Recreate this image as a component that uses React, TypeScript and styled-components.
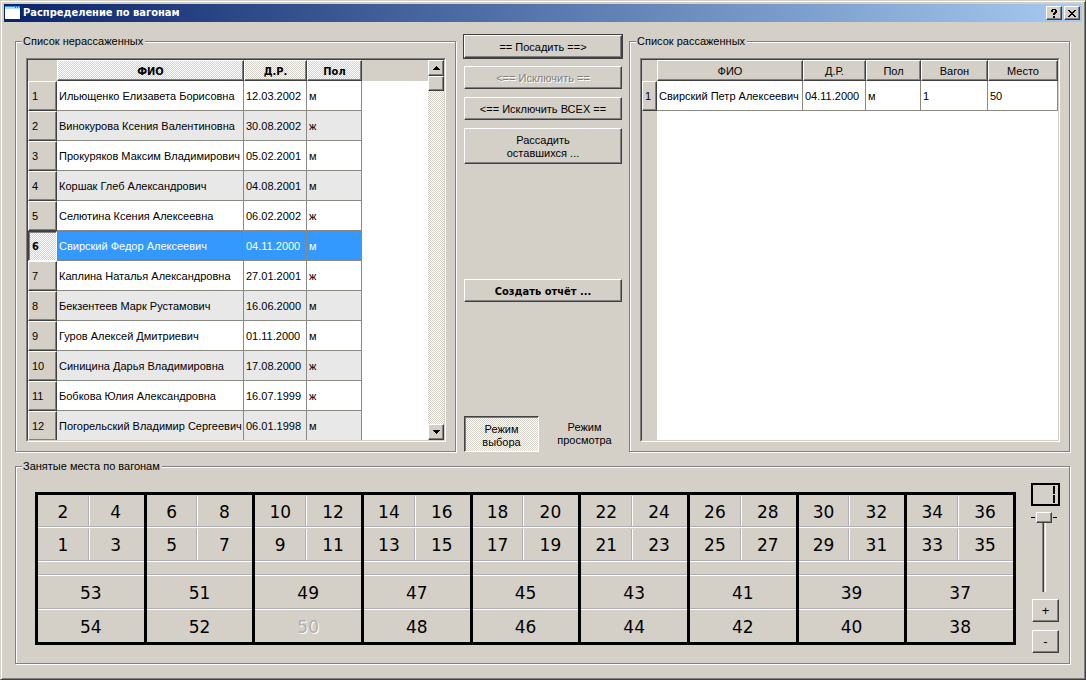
import React, { useState } from "react";
import styled, { createGlobalStyle, css } from "styled-components";

const face = "#d4d0c8";
const shade = "#808080";
const dark = "#404040";
const dither = `repeating-conic-gradient(#ffffff 0 25%, ${face} 0 50%) 0 0 / 2px 2px`;
const uiFont = `"Liberation Sans", sans-serif`;
const boldFont = `"DejaVu Sans Condensed", "Liberation Sans", sans-serif`;

const raised = css`
  border: 1px solid;
  border-color: #fff ${dark} ${dark} #fff;
  box-shadow: inset -1px -1px 0 ${shade};
`;

const GlobalStyle = createGlobalStyle`
  * { box-sizing: border-box; }
  body { margin: 0; background: ${face}; }
  button, input { font: inherit; color: inherit; margin: 0; padding: 0; border-radius: 0; }
`;

const Dialog = styled.div`
  display: flex;
  flex-direction: column;
  height: 100vh;
  min-height: 560px;
  min-width: 900px;
  border: 1px solid;
  border-color: ${face} ${dark} ${dark} ${face};
  box-shadow: inset 1px 1px 0 #fff, inset -1px -1px 0 ${shade};
  background: ${face};
  color: #000;
  font: 11px/13px ${uiFont};
`;

const TitleBar = styled.header`
  display: flex;
  align-items: center;
  gap: 2px;
  height: 18px;
  margin: 3px 3px 0;
  padding: 0 2px 0 1px;
  background: linear-gradient(to right, #0a246a, #a6caf0);
  color: #fff;
`;

const Title = styled.h1`
  flex: 1;
  margin: 0;
  font: 700 11px/16px ${boldFont};
`;

const CaptionButton = styled.button`
  display: flex;
  align-items: center;
  justify-content: center;
  width: 16px;
  height: 14px;
  background: ${face};
  color: #000;
  ${raised}
`;

const Body = styled.main`
  flex: 1;
  display: flex;
  flex-direction: column;
  gap: 7px;
  min-height: 0;
  padding: 13px 14px 14px;
`;

const Lists = styled.div`
  flex: 1;
  display: grid;
  grid-template-columns: minmax(0, 1fr) 160px minmax(0, 1fr);
  grid-template-rows: minmax(0, 1fr);
  gap: 6px;
  min-height: 0;
`;

const Group = styled.fieldset`
  display: flex;
  min-width: 0;
  min-height: 0;
  margin: 0 1px 1px 0;
  padding: 11px 9px 9px 10px;
  border: 1px solid ${shade};
  box-shadow: 1px 1px 0 #fff, inset 1px 1px 0 #fff;
`;

const Legend = styled.legend`
  margin-left: -4px;
  padding: 0 2px 0 1px;
  background: ${face};
  line-height: 12px;
`;

const View = styled.div`
  flex: 1;
  display: flex;
  min-width: 0;
  min-height: 0;
  border: 1px solid;
  border-color: ${shade} #fff #fff ${shade};
  background: #fff;
`;

const ViewInner = styled.div`
  flex: 1;
  display: flex;
  min-width: 0;
  border: 1px solid;
  border-color: ${dark} ${face} ${face} ${dark};
`;

const Sheet = styled.div<{ $gutter?: number }>`
  flex: 1;
  min-width: 0;
  overflow: hidden;
  background: linear-gradient(${face}, ${face}) 0 0 / 100% 21px no-repeat,
    linear-gradient(${face}, ${face}) 0 0 / ${(p) => p.$gutter ?? 0}px 100% no-repeat;
`;

const Table = styled.table<{ $fill?: boolean }>`
  table-layout: fixed;
  width: ${(p) => (p.$fill ? "100%" : "334px")};
  border-collapse: separate;
  border-spacing: 0;
`;

const HeadCell = styled.th<{ $active?: boolean }>`
  height: 21px;
  padding: 1px 0 0;
  background: ${(p) => (p.$active ? dither : face)};
  font-weight: 400;
  ${(p) => p.$active && `font: 700 11px/13px ${boldFont};`}
  ${raised}
`;

const Corner = styled.td`
  padding: 0;
  background: ${face};
`;

const RowHead = styled.th<{ $pressed?: boolean; $narrow?: boolean }>`
  height: 30px;
  padding: 0 ${(p) => (p.$narrow ? 2 : 3)}px;
  background: ${face};
  font-weight: 400;
  text-align: left;
  ${raised}
  ${(p) =>
    p.$pressed &&
    css`
      border-color: ${dark} #fff #fff ${dark};
      box-shadow: inset 1px 1px 0 ${shade};
      background: ${dither};
      font: 700 11px/13px ${boldFont};
    `}
`;

const Row = styled.tr<{ $alt?: boolean; $selected?: boolean }>`
  background: ${(p) => (p.$selected ? "#3399ff" : p.$alt ? "#e8e8e8" : "#fff")};
  color: ${(p) => (p.$selected ? "#fff" : "#000")};
  th {
    color: #000;
  }
`;

const dotsX = "repeating-linear-gradient(to right, #cc6600 0 1px, transparent 1px 2px)";
const dotsY = "repeating-linear-gradient(to bottom, #cc6600 0 1px, transparent 1px 2px)";

const Cell = styled.td<{ $focus?: boolean }>`
  height: 30px;
  padding: 1px 0 0 2px;
  border: solid #8a8a82;
  border-width: 0 1px 1px 0;
  white-space: nowrap;
  ${(p) =>
    p.$focus &&
    css`
      background: ${dotsX} top / 100% 1px no-repeat, ${dotsX} bottom / 100% 1px no-repeat,
        ${dotsY} left / 1px 100% no-repeat, ${dotsY} right / 1px 100% no-repeat;
    `}
`;

const ScrollBar = styled.div`
  flex: none;
  display: flex;
  flex-direction: column;
  width: 16px;
  background: ${dither};
`;

const ScrollButton = styled.button`
  display: flex;
  align-items: center;
  justify-content: center;
  height: 16px;
  background: ${face};
  ${raised}
`;

const ScrollThumb = styled.div`
  height: 15px;
  background: ${face};
  ${raised}
`;

const ScrollTrack = styled.div`
  flex: 1;
`;

const Actions = styled.div`
  display: flex;
  flex-direction: column;
  gap: 8px;
  padding: 0 1px 1px;
`;

const PushButton = styled.button<{ $default?: boolean; $strong?: boolean; $tall?: boolean }>`
  height: ${(p) => (p.$tall ? 36 : 23)}px;
  padding: 1px 4px 0;
  background: ${face};
  ${(p) => p.$strong && `font: 700 11px/13px ${boldFont};`}
  ${raised}
  ${(p) => p.$default && `outline: 1px solid ${dark};`}
  &:disabled {
    color: ${shade};
    text-shadow: 1px 1px 0 #fff;
  }
`;

const Spacer = styled.div<{ $size?: number }>`
  flex: ${(p) => (p.$size ? `0 0 ${p.$size}px` : "1")};
`;

const Modes = styled.div`
  display: flex;
  gap: 8px;
`;

const ModeButton = styled.button<{ $on?: boolean }>`
  flex: 1;
  height: 36px;
  border: 1px solid transparent;
  background: transparent;
  ${(p) =>
    p.$on &&
    css`
      padding-top: 3px;
      border-color: ${dark} #fff #fff ${dark};
      box-shadow: inset 1px 1px 0 ${shade};
      background: ${dither};
    `}
`;

const CarGroup = styled(Group)`
  flex: none;
  align-items: center;
  gap: 15px;
  padding-bottom: 10px;
`;

const Car = styled.div`
  flex: 1;
  display: grid;
  grid-template-columns: repeat(9, minmax(0, 1fr));
  margin-left: 9px;
  border: solid #000;
  border-width: 3px 0 3px 3px;
  font: 17px/20px "DejaVu Sans", sans-serif;
`;

const Bay = styled.div`
  display: grid;
  grid-template-columns: 52fr 54fr;
  grid-template-rows: 33px 34px 14px 34px 32px;
  border-right: 3px solid #000;
`;

const Seat = styled.button<{ $wide?: boolean; $divided?: boolean; $last?: boolean }>`
  grid-column: ${(p) => (p.$wide ? "1 / -1" : "auto")};
  padding: ${(p) => (p.$wide ? "2px 0 0" : "2px 2px 0 0")};
  border: 0;
  border-bottom: ${(p) => (p.$last ? "0" : "1px solid #fff")};
  box-shadow: ${(p) => (p.$last ? "none" : "inset 0 -1px 0 #b0b0b4")};
  background: ${(p) =>
    p.$divided
      ? `linear-gradient(to right, #b0b0b4 1px, #fff 1px) 100% 1px / 2px 100% no-repeat`
      : "transparent"};
  &:disabled {
    color: #b0b0b0;
    text-shadow: 1px 1px 0 #fff;
  }
`;

const Aisle = styled.div`
  grid-column: 1 / -1;
  border-bottom: 1px solid #fff;
  box-shadow: inset 0 -1px 0 #b0b0b4;
`;

const Controls = styled.div`
  flex: none;
  display: flex;
  flex-direction: column;
  align-items: center;
  width: 29px;
`;

const Lcd = styled.output`
  display: flex;
  justify-content: flex-end;
  width: 29px;
  height: 23px;
  border: 2px solid #000;
`;

const SliderRow = styled.div`
  display: flex;
  justify-content: center;
  gap: 1px;
  margin: 6px 0 7px;
  padding-right: 3px;
`;

const Tick = styled.span`
  width: 4px;
  height: 1px;
  margin-top: 5px;
  background: #000;
`;

const Slider = styled.input`
  appearance: none;
  writing-mode: vertical-lr;
  width: 16px;
  height: 80px;
  background: linear-gradient(to right, ${shade} 1px, ${dark} 1px 2px, ${face} 2px 3px, #fff 3px) 6px 1px / 4px 79px
    no-repeat;
  &::-webkit-slider-thumb {
    appearance: none;
    width: 16px;
    height: 11px;
    background: ${face};
    ${raised}
  }
`;

const StepButton = styled(PushButton)`
  width: 27px;
  padding: 0;
  font-size: 13px;
  & + & {
    margin-top: 8px;
  }
`;

const people: [string, string, string][] = [
  ["Ильющенко Елизавета Борисовна", "12.03.2002", "м"],
  ["Винокурова Ксения Валентиновна", "30.08.2002", "ж"],
  ["Прокуряков Максим Владимирович", "05.02.2001", "м"],
  ["Коршак Глеб Александрович", "04.08.2001", "м"],
  ["Селютина Ксения Алексеевна", "06.02.2002", "ж"],
  ["Свирский Федор Алексеевич", "04.11.2000", "м"],
  ["Каплина Наталья Александровна", "27.01.2001", "ж"],
  ["Бекзентеев Марк Рустамович", "16.06.2000", "м"],
  ["Гуров Алексей Дмитриевич", "01.11.2000", "м"],
  ["Синицина Дарья Владимировна", "17.08.2000", "ж"],
  ["Бобкова Юлия Александровна", "16.07.1999", "ж"],
  ["Погорельский Владимир Сергеевич", "06.01.1998", "м"],
];

const seated = [["Свирский Петр Алексеевич", "04.11.2000", "м", "1", "50"]];
const takenSeats = [50];

function Arrow({ up }: { up?: boolean }) {
  return (
    <svg width="7" height="4" viewBox="0 0 7 4" shapeRendering="crispEdges" aria-hidden="true">
      <path d={up ? "M3 0h1v1h1v1h1v1h1v1H0V3h1V2h1V1h1z" : "M0 0h7v1H6v1H5v1H4v1H3V3H2V2H1V1H0z"} />
    </svg>
  );
}

function SeatButton({ n, ...rest }: { n: number; $wide?: boolean; $divided?: boolean; $last?: boolean }) {
  return (
    <Seat type="button" disabled={takenSeats.includes(n)} {...rest}>
      {n}
    </Seat>
  );
}

export default function App() {
  const [selected, setSelected] = useState(5);
  const [picking, setPicking] = useState(true);
  const [car, setCar] = useState(1);

  return (
    <Dialog>
      <GlobalStyle />
      <TitleBar>
        <svg width="16" height="16" viewBox="0 0 16 16" shapeRendering="crispEdges" aria-hidden="true">
          <path d="M0 2h15v12H0z" fill="#fff" />
          <path d="M0 2h15v2H0z" fill="#b8dcf8" />
          <path d="M0 1h15v1H0z" fill="#3c8ce0" />
          <path d="M10 2h1v1h-1zM12 2h1v1h-1z" fill="#2a6ac0" />
          <path d="M14 2h1v1h-1z" fill="#e06030" />
        </svg>
        <Title>Распределение по вагонам</Title>
        <CaptionButton type="button" aria-label="Справка">
          <svg width="8" height="9" viewBox="0 0 8 9" shapeRendering="crispEdges" aria-hidden="true">
            <path d="M2 0h4v1h1v3H6v1H5v1H3V4h1V3h1V1H3v2H1V1h1zM3 7h2v2H3z" />
          </svg>
        </CaptionButton>
        <CaptionButton type="button" aria-label="Закрыть">
          <svg width="8" height="7" viewBox="0 0 8 7" shapeRendering="crispEdges" aria-hidden="true">
            <path d="M0 0h2v1h1v1h2V1h1V0h2v1H7v1H6v1H5v1h1v1h1v1h1v1H6V6H5V5H3v1H2v1H0V6h1V5h1V4h1V3H2V2H1V1H0z" />
          </svg>
        </CaptionButton>
      </TitleBar>

      <Body>
        <Lists>
          <Group>
            <Legend>Список нерассаженных</Legend>
            <View>
              <ViewInner>
                <Sheet>
                  <Table>
                    <colgroup>
                      <col width="29" />
                      <col width="187" />
                      <col width="63" />
                      <col width="55" />
                    </colgroup>
                    <thead>
                      <tr>
                        <Corner />
                        <HeadCell $active>ФИО</HeadCell>
                        <HeadCell $active>Д.Р.</HeadCell>
                        <HeadCell $active>Пол</HeadCell>
                      </tr>
                    </thead>
                    <tbody>
                      {people.map(([name, born, sex], i) => (
                        <Row
                          key={name}
                          $alt={i % 2 === 1}
                          $selected={i === selected}
                          onClick={() => setSelected(i)}
                        >
                          <RowHead scope="row" $pressed={i === selected}>
                            {i + 1}
                          </RowHead>
                          <Cell $focus={i === selected}>{name}</Cell>
                          <Cell>{born}</Cell>
                          <Cell>{sex}</Cell>
                        </Row>
                      ))}
                    </tbody>
                  </Table>
                </Sheet>
                <ScrollBar>
                  <ScrollButton type="button" aria-label="Вверх">
                    <Arrow up />
                  </ScrollButton>
                  <ScrollThumb />
                  <ScrollTrack />
                  <ScrollButton type="button" aria-label="Вниз">
                    <Arrow />
                  </ScrollButton>
                </ScrollBar>
              </ViewInner>
            </View>
          </Group>

          <Actions>
            <PushButton type="button" $default>
              == Посадить ==&gt;
            </PushButton>
            <PushButton type="button" disabled>
              &lt;== Исключить ==
            </PushButton>
            <PushButton type="button">&lt;== Исключить ВСЕХ ==</PushButton>
            <PushButton type="button" $tall>
              Рассадить
              <br />
              оставшихся ...
            </PushButton>
            <Spacer $size={99} />
            <PushButton type="button" $strong>
              Создать отчёт ...
            </PushButton>
            <Spacer />
            <Modes>
              <ModeButton type="button" $on={picking} onClick={() => setPicking(true)}>
                Режим
                <br />
                выбора
              </ModeButton>
              <ModeButton type="button" $on={!picking} onClick={() => setPicking(false)}>
                Режим
                <br />
                просмотра
              </ModeButton>
            </Modes>
          </Actions>

          <Group>
            <Legend>Список рассаженных</Legend>
            <View>
              <ViewInner>
                <Sheet $gutter={15}>
                  <Table $fill>
                    <colgroup>
                      <col width="15" />
                      <col width="146" />
                      <col width="63" />
                      <col width="55" />
                      <col width="67" />
                      <col />
                    </colgroup>
                    <thead>
                      <tr>
                        <Corner />
                        <HeadCell>ФИО</HeadCell>
                        <HeadCell>Д.Р.</HeadCell>
                        <HeadCell>Пол</HeadCell>
                        <HeadCell>Вагон</HeadCell>
                        <HeadCell>Место</HeadCell>
                      </tr>
                    </thead>
                    <tbody>
                      {seated.map((cells, i) => (
                        <Row key={cells[0]}>
                          <RowHead scope="row" $narrow>
                            {i + 1}
                          </RowHead>
                          {cells.map((value, c) => (
                            <Cell key={c}>{value}</Cell>
                          ))}
                        </Row>
                      ))}
                    </tbody>
                  </Table>
                </Sheet>
              </ViewInner>
            </View>
          </Group>
        </Lists>

        <CarGroup>
          <Legend>Занятые места по вагонам</Legend>
          <Car>
            {Array.from({ length: 9 }, (_, i) => (
              <Bay key={i}>
                <SeatButton n={4 * i + 2} $divided />
                <SeatButton n={4 * i + 4} />
                <SeatButton n={4 * i + 1} $divided />
                <SeatButton n={4 * i + 3} />
                <Aisle />
                <SeatButton n={53 - 2 * i} $wide />
                <SeatButton n={54 - 2 * i} $wide $last />
              </Bay>
            ))}
          </Car>
          <Controls>
            <Lcd aria-label={`Вагон ${car}`}>
              <svg width="8" height="19" viewBox="0 0 8 19" shapeRendering="crispEdges" aria-hidden="true">
                <path d="M3 1h2v8H3zM3 10h2v8H3z" />
              </svg>
            </Lcd>
            <SliderRow>
              <Tick />
              <Slider
                type="range"
                aria-label="Номер вагона"
                min={1}
                max={12}
                value={car}
                onChange={(e) => setCar(Number(e.target.value))}
              />
              <Tick />
            </SliderRow>
            <StepButton type="button" onClick={() => setCar(Math.min(12, car + 1))}>
              +
            </StepButton>
            <StepButton type="button" onClick={() => setCar(Math.max(1, car - 1))}>
              -
            </StepButton>
          </Controls>
        </CarGroup>
      </Body>
    </Dialog>
  );
}
